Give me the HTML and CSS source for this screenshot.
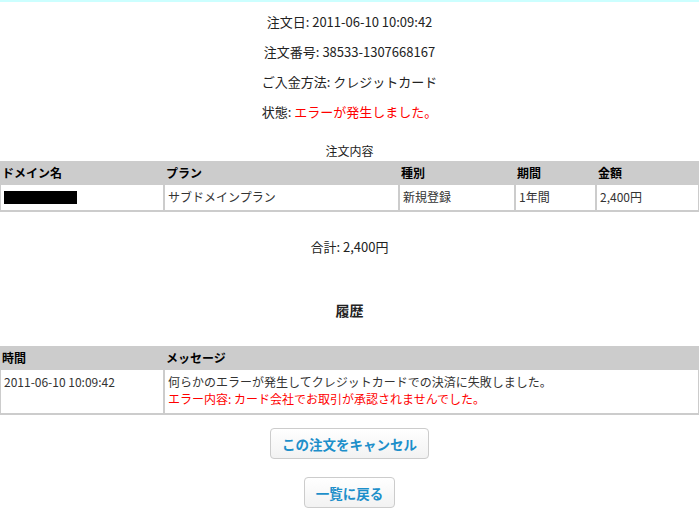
FILE: index.html
```html
<!DOCTYPE html>
<html lang="ja">
<head>
    <meta charset="UTF-8">
    <title>注文詳細</title>
    <link rel="stylesheet" href="styles.css">
</head>
<body>
<div class="order-page">
    <div class="order-info">
        <div class="info-line">注文日: 2011-06-10 10:09:42</div>
        <div class="info-line">注文番号: 38533-1307668167</div>
        <div class="info-line">ご入金方法: クレジットカード</div>
        <div class="info-line">状態: <span class="error">エラーが発生しました。</span></div>
    </div>

    <table class="data-table order-table">
        <caption>注文内容</caption>
        <thead>
            <tr>
                <th class="col-domain">ドメイン名</th>
                <th class="col-plan">プラン</th>
                <th class="col-type">種別</th>
                <th class="col-term">期間</th>
                <th class="col-price">金額</th>
            </tr>
        </thead>
        <tbody>
            <tr>
                <td><span class="redacted"></span></td>
                <td>サブドメインプラン</td>
                <td>新規登録</td>
                <td>1年間</td>
                <td>2,400円</td>
            </tr>
        </tbody>
    </table>

    <div class="total">合計: 2,400円</div>

    <h2 class="section-title">履歴</h2>

    <table class="data-table history-table">
        <thead>
            <tr>
                <th class="col-domain">時間</th>
                <th>メッセージ</th>
            </tr>
        </thead>
        <tbody>
            <tr>
                <td>2011-06-10 10:09:42</td>
                <td>何らかのエラーが発生してクレジットカードでの決済に失敗しました。<br>
                    <span class="error">エラー内容: カード会社でお取引が承認されませんでした。</span></td>
            </tr>
        </tbody>
    </table>

    <div class="actions">
        <button class="btn">この注文をキャンセル</button>
        <button class="btn">一覧に戻る</button>
    </div>
</div>
</body>
</html>
```
FILE: styles.css
```css
body {
    margin: 0;
    border-top: 2px solid #ccffff;
    background-color: #ffffff;
    color: #222222;
    font-family: "Noto Sans CJK JP", sans-serif;
    font-size: 13px;
}

.order-info {
    padding-top: 5px;
    text-align: center;
}
.info-line {
    line-height: 30px;
}
.error {
    color: #ff0000;
}

/*
Tables
*/
.data-table {
    width: calc(100% + 2px);
    margin: 0 -1px;
    border-collapse: separate;
    border-spacing: 2px;
    background-color: #cccccc;
    font-size: 12px;
    table-layout: fixed;
}
.data-table caption {
    background-color: #ffffff;
    padding-bottom: 2px;
    line-height: 16px;
}
.data-table th {
    text-align: left;
    font-weight: bold;
    color: #000000;
    padding: 0 1px;
    line-height: 20px;
}
.data-table td {
    background-color: #ffffff;
    color: #333333;
    padding: 2px 3px 3px;
    line-height: 20px;
    vertical-align: top;
}
.order-table {
    margin-top: 16px;
}
.col-domain { width: 160px; }
.col-plan { width: 231px; }
.col-type { width: 112px; }
.col-term { width: 77px; }

.redacted {
    display: inline-block;
    width: 73px;
    height: 13px;
    margin-top: 4px;
    vertical-align: top;
    background-color: #000000;
}
.history-table td {
    line-height: 17px;
    padding: 3px 3px 6px;
}

.total {
    text-align: center;
    margin-top: 25px;
}
.section-title {
    text-align: center;
    font-size: 14px;
    margin: 44px 0 26px;
}

/*
Buttons
*/
.actions {
    display: flex;
    flex-direction: column;
    align-items: center;
    gap: 18px;
    padding-top: 13px;
}
.btn {
    font-family: "Noto Sans CJK JP", sans-serif;
    font-size: 13.5px;
    font-weight: bold;
    color: #1d8fca;
    background-image: linear-gradient(#ffffff, #f2f2f2);
    border: 1px solid #cccccc;
    border-radius: 4px;
    height: 31px;
    padding: 0 11px;
}
```
